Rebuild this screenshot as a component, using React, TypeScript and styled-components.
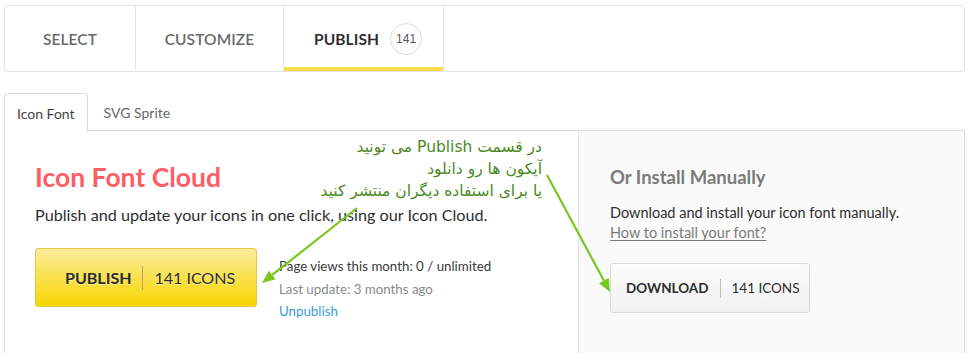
import React from "react";
import styled, { createGlobalStyle, css } from "styled-components";

const GlobalStyle = createGlobalStyle`
  html, body {
    margin: 0;
    padding: 0;
    overflow: hidden;
    background: #ffffff;
    font-family: Lato, "Open Sans", sans-serif;
    color: #333333;
  }
  * { box-sizing: border-box; }
`;

const Page = styled.div`
  position: relative;
  width: 968px;
  height: 353px;
  padding: 5px 3px 0 4px;
`;

const StepBar = styled.nav`
  display: flex;
  height: 67px;
  border: 1px solid #e2e2e2;
  border-radius: 4px;
  overflow: hidden;
`;

const Step = styled.div<{ $width: number; $active?: boolean }>`
  width: ${(p) => p.$width}px;
  display: flex;
  align-items: center;
  justify-content: center;
  gap: 11px;
  border-right: 1px solid #e5e5e5;
  font-size: 15.5px;
  text-transform: uppercase;
  letter-spacing: 0.1px;
  color: #6a6a6a;
  font-weight: 600;
  ${(p) =>
    p.$active &&
    css`
      color: #2f2f2f;
      font-weight: 700;
      box-shadow: inset 0 -4px 0 #f9dc4a;
      padding-left: 9px;
    `}
`;

const CountBadge = styled.span`
  width: 32px;
  height: 32px;
  border-radius: 50%;
  border: 1px solid #dcdcdc;
  display: inline-flex;
  align-items: center;
  justify-content: center;
  font-size: 12px;
  font-weight: 400;
  color: #555;
  font-family: "Liberation Sans", Arial, sans-serif;
`;

const SubTabs = styled.div`
  display: flex;
  margin-top: 21px;
  height: 38px;
  position: relative;
  z-index: 1;
`;

const SubTab = styled.div<{ $active?: boolean }>`
  height: 38px;
  padding: 0 12px;
  display: flex;
  align-items: center;
  font-size: 14px;
  color: #666;
  border: 1px solid transparent;
  border-bottom: none;
  border-radius: 4px 4px 0 0;
  ${(p) =>
    p.$active &&
    css`
      color: #444;
      background: #fff;
      border-color: #dddddd;
      height: 39px;
    `}
  & + & {
    padding: 0 15px;
  }
`;

const Panel = styled.section`
  display: grid;
  grid-template-columns: 573px 1fr;
  height: 240px;
  border: 1px solid #dddddd;
  border-bottom: none;
  margin-top: -1px;
`;

const CloudColumn = styled.div`
  padding: 30px 0 0 30px;
  display: flex;
  flex-direction: column;
  align-items: flex-start;
`;

const CloudTitle = styled.h2`
  margin: 0;
  font-size: 26.5px;
  line-height: 32px;
  font-weight: 700;
  color: #fd5d64;
`;

const Lead = styled.p`
  margin: 12px 0 0;
  font-size: 16.2px;
  line-height: 20px;
  color: #2e2e2e;
`;

const ActionRow = styled.div`
  display: flex;
  align-items: flex-start;
  gap: 22px;
  margin-top: 23px;
`;

const ButtonLabel = styled.span`
  font-weight: 700;
`;

const ButtonDivider = styled.span`
  width: 1px;
  align-self: center;
`;

const ActionButton = styled.button<{ $variant: "primary" | "plain" }>`
  display: inline-flex;
  align-items: center;
  gap: 11px;
  font-family: inherit;
  color: #2c2c2c;
  border-radius: 3px;
  cursor: pointer;
  white-space: nowrap;
  text-transform: uppercase;
  ${(p) =>
    p.$variant === "primary"
      ? css`
          width: 222px;
          height: 59px;
          padding: 0 0 0 29px;
          font-size: 16px;
          background: linear-gradient(#fbec9c, #f8d600);
          border: 1px solid #e3c74f;
          text-shadow: 0 1px 0 rgba(255, 255, 255, 0.55);
          ${ButtonDivider} {
            height: 24px;
            background: #b9a65a;
          }
        `
      : css`
          width: 200px;
          height: 50px;
          padding: 0 0 0 15px;
          font-size: 13.5px;
          background: linear-gradient(#fcfcfc, #f1f1f1);
          border: 1px solid #d8d8d8;
          ${ButtonDivider} {
            height: 19px;
            background: #bdbdbd;
          }
        `}
`;

const Stats = styled.ul`
  list-style: none;
  margin: 7px 0 0;
  padding: 0;
  font-size: 13.3px;
  line-height: 22.5px;
`;

const StatLine = styled.li<{ $tone: "dark" | "muted" | "link" }>`
  color: ${(p) =>
    p.$tone === "dark" ? "#3a3a3a" : p.$tone === "muted" ? "#8a8a8a" : "#3b9ad8"};
`;

const ManualColumn = styled.div`
  background: #fafafa;
  border-left: 1px solid #e3e3e3;
  padding: 34px 0 0 31px;
  display: flex;
  flex-direction: column;
  align-items: flex-start;
`;

const ManualTitle = styled.h3`
  margin: 0;
  font-size: 18.5px;
  line-height: 24px;
  font-weight: 700;
  color: #7a7a7a;
`;

const ManualText = styled.p`
  margin: 14px 0 20px;
  font-size: 14.5px;
  line-height: 20px;
  color: #2e2e2e;
`;

const HelpLink = styled.a`
  display: block;
  color: #7a7a7a;
  text-decoration: underline;
  text-underline-offset: 2px;
`;

const Annotation = styled.div`
  position: absolute;
  left: 296px;
  top: 136px;
  width: 246px;
  direction: rtl;
  text-align: right;
  font-family: "DejaVu Sans", "Noto Sans", sans-serif;
  font-size: 15.5px;
  line-height: 22px;
  color: #4a8a1e;
  pointer-events: none;
`;

const ArrowLayer = styled.svg`
  position: absolute;
  left: 0;
  top: 0;
  width: 968px;
  height: 353px;
  pointer-events: none;
`;

function Arrow({ x1, y1, x2, y2 }: { x1: number; y1: number; x2: number; y2: number }) {
  const ang = Math.atan2(y2 - y1, x2 - x1);
  const len = 13;
  const half = 5.5;
  const bx = x2 - len * Math.cos(ang);
  const by = y2 - len * Math.sin(ang);
  const px = -Math.sin(ang) * half;
  const py = Math.cos(ang) * half;
  return (
    <g>
      <line x1={x1} y1={y1} x2={bx} y2={by} stroke="#78c81e" strokeWidth={2.2} />
      <polygon
        points={`${x2},${y2} ${bx + px},${by + py} ${bx - px},${by - py}`}
        fill="#78c81e"
      />
    </g>
  );
}

export default function App() {
  return (
    <>
      <GlobalStyle />
      <Page>
        <StepBar>
          <Step $width={131}>Select</Step>
          <Step $width={148}>Customize</Step>
          <Step $width={160} $active>
            Publish <CountBadge>141</CountBadge>
          </Step>
        </StepBar>

        <SubTabs>
          <SubTab $active>Icon Font</SubTab>
          <SubTab>SVG Sprite</SubTab>
        </SubTabs>

        <Panel>
          <CloudColumn>
            <CloudTitle>Icon Font Cloud</CloudTitle>
            <Lead>Publish and update your icons in one click, using our Icon Cloud.</Lead>
            <ActionRow>
              <ActionButton $variant="primary">
                <ButtonLabel>Publish</ButtonLabel>
                <ButtonDivider />
                <span>141 Icons</span>
              </ActionButton>
              <Stats>
                <StatLine $tone="dark">Page views this month: 0 / unlimited</StatLine>
                <StatLine $tone="muted">Last update: 3 months ago</StatLine>
                <StatLine $tone="link">Unpublish</StatLine>
              </Stats>
            </ActionRow>
          </CloudColumn>

          <ManualColumn>
            <ManualTitle>Or Install Manually</ManualTitle>
            <ManualText>
              Download and install your icon font manually.
              <HelpLink href="#">How to install your font?</HelpLink>
            </ManualText>
            <ActionButton $variant="plain">
              <ButtonLabel>Download</ButtonLabel>
              <ButtonDivider />
              <span>141 Icons</span>
            </ActionButton>
          </ManualColumn>
        </Panel>

        <Annotation>
          <div>در قسمت Publish می تونید</div>
          <div>آیکون ها رو دانلود</div>
          <div>یا برای استفاده دیگران منتشر کنید</div>
        </Annotation>

        <ArrowLayer viewBox="0 0 968 353">
          <Arrow x1={357} y1={208} x2={262} y2={283} />
          <Arrow x1={547} y1={175} x2={610} y2={292} />
        </ArrowLayer>
      </Page>
    </>
  );
}
